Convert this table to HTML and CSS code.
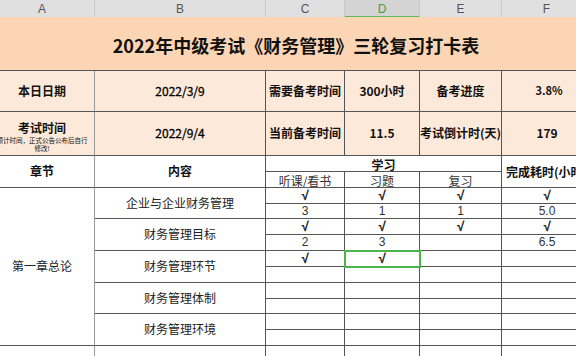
FILE: index.html
```html
<!DOCTYPE html>
<html lang="zh">
<head>
<meta charset="utf-8">
<title>三轮复习打卡表</title>
<link rel="stylesheet" href="styles.css">
</head>
<body>
<div class="sheet">
  <div class="colbar">
    <div class="ch">A</div>
    <div class="ch">B</div>
    <div class="ch">C</div>
    <div class="ch ch-sel">D</div>
    <div class="ch">E</div>
    <div class="ch">F</div>
  </div>
  <div class="grid">
    <div class="c title">2022年中级考试《财务管理》三轮复习打卡表</div>

    <div class="c info lbl a">本日日期</div>
    <div class="c info val date">2022/3/9</div>
    <div class="c info lbl">需要备考时间</div>
    <div class="c info val">300小时</div>
    <div class="c info lbl">备考进度</div>
    <div class="c info val small f">3.8%</div>

    <div class="c info lbl a stack">
      <span class="main">考试时间</span>
      <span class="note">预计时间，正式公告公布后自行</span>
      <span class="note">修改!</span>
    </div>
    <div class="c info val date">2022/9/4</div>
    <div class="c info lbl">当前备考时间</div>
    <div class="c info val">11.5</div>
    <div class="c info lbl">考试倒计时(天)</div>
    <div class="c info val f">179</div>

    <div class="c hd a r2">章节</div>
    <div class="c hd r2">内容</div>
    <div class="c hd span3">学习</div>
    <div class="c hd r2 f left">完成耗时(小时)</div>
    <div class="c sub">听课/看书</div>
    <div class="c sub">习题</div>
    <div class="c sub">复习</div>

    <div class="c txt a r10">第一章总论</div>
    <div class="c txt r2">企业与企业财务管理</div>
    <div class="c d ck">√</div>
    <div class="c d ck">√</div>
    <div class="c d ck">√</div>
    <div class="c d ck f">√</div>
    <div class="c d">3</div>
    <div class="c d">1</div>
    <div class="c d">1</div>
    <div class="c d f">5.0</div>

    <div class="c txt r2">财务管理目标</div>
    <div class="c d ck">√</div>
    <div class="c d ck">√</div>
    <div class="c d ck">√</div>
    <div class="c d ck f">√</div>
    <div class="c d">2</div>
    <div class="c d">3</div>
    <div class="c d"></div>
    <div class="c d f">6.5</div>

    <div class="c txt r2">财务管理环节</div>
    <div class="c d ck">√</div>
    <div class="c d ck sel">√</div>
    <div class="c d"></div>
    <div class="c d f"></div>
    <div class="c d"></div>
    <div class="c d"></div>
    <div class="c d"></div>
    <div class="c d f"></div>

    <div class="c txt r2">财务管理体制</div>
    <div class="c d"></div>
    <div class="c d"></div>
    <div class="c d"></div>
    <div class="c d f"></div>
    <div class="c d"></div>
    <div class="c d"></div>
    <div class="c d"></div>
    <div class="c d f"></div>

    <div class="c txt r2">财务管理环境</div>
    <div class="c d"></div>
    <div class="c d"></div>
    <div class="c d"></div>
    <div class="c d f"></div>
    <div class="c d"></div>
    <div class="c d"></div>
    <div class="c d"></div>
    <div class="c d f"></div>

    <div class="c txt a next"></div>
    <div class="c txt next"></div>
    <div class="c d next"></div>
    <div class="c d next"></div>
    <div class="c d next"></div>
    <div class="c d f next"></div>
  </div>
</div>
</body>
</html>
```

FILE: styles.css
```css
html, body {
  margin: 0;
  padding: 0;
  background: #ffffff;
  overflow: hidden;
}
body {
  width: 576px;
  height: 356px;
  font-family: "Noto Sans CJK SC", "Noto Sans", sans-serif;
  color: #111;
}
.sheet {
  margin-left: -10px;
  width: 602px;
}
.colbar {
  display: grid;
  grid-template-columns: 105px 171px 79px 75px 82px 90px;
  height: 17px;
  background: #e0e0e0;
}
.ch {
  display: flex;
  align-items: center;
  justify-content: center;
  font-family: "Liberation Sans", "Noto Sans", sans-serif;
  font-size: 12px;
  color: #555;
  border-right: 1px solid #c9c9c9;
  box-sizing: border-box;
}
.ch-sel {
  background: #d4d4d4;
  color: #3f9f3f;
  border-bottom: 2px solid #5cb85c;
  padding-top: 2px;
}
.grid {
  display: grid;
  grid-template-columns: 105px 171px 79px 75px 82px 90px;
  grid-template-rows: 54px 41px 44px 16px 16px 16px 15px 16px 16px 16px 16px 16px 15px 16px 16px 31px;
}
.c {
  box-sizing: border-box;
  border-right: 1px solid #555;
  border-bottom: 1px solid #555;
  display: flex;
  align-items: center;
  justify-content: center;
  white-space: nowrap;
  overflow: hidden;
  font-size: 12px;
  line-height: 1.2;
}
.c.a {
  border-right-color: #9a9a9a;
}
.c.f {
  border-right: none;
}
.title {
  grid-column: 1 / -1;
  border-right: none;
  background: #fcd5b4;
  font-size: 18px;
  font-weight: bold;
  color: #111;
  padding-top: 5px;
  padding-left: 10px;
}
.info {
  background: #fde9d9;
}
.lbl {
  font-weight: bold;
}
.val {
  font-weight: bold;
  color: #111;
}
.val.date {
  font-weight: normal;
  color: #000;
  -webkit-text-stroke: 0.3px #000;
}
.val.small {
  font-size: 11px;
  padding-left: 4px;
}
.stack {
  flex-direction: column;
  overflow: visible;
  padding-top: 4px;
}
.stack .main {
  line-height: 15px;
}
.note {
  font-size: 6.5px;
  font-weight: normal;
  line-height: 8px;
}
.stack .note:nth-child(2) {
  margin-top: 1px;
}
.hd {
  font-weight: bold;
  color: #111;
}
.hd.left {
  justify-content: flex-start;
  padding-left: 4px;
  padding-top: 2px;
}
.r2 {
  grid-row: span 2;
}
.r10 {
  grid-row: span 10;
}
.span3 {
  grid-column: span 3;
  padding-top: 3px;
}
.sub {
  color: #333;
  padding-top: 3px;
}
.txt {
  color: #222;
}
.txt.a {
  padding-right: 10px;
  padding-left: 10px;
  justify-content: center;
}
.d {
  font-family: "Liberation Sans", "Noto Sans", sans-serif;
  color: #333;
}
.d.ck {
  font-size: 13px;
  color: #111;
  -webkit-text-stroke: 0.4px #111;
}
.sel {
  position: relative;
  z-index: 1;
  outline: 2px solid #4db34d;
  outline-offset: -1px;
}
.next {
  border-bottom: none;
}
```
